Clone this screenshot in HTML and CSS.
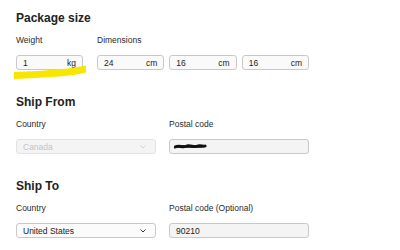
FILE: index.html
```html
<!DOCTYPE html>
<html>
<head>
<meta charset="utf-8">
<link rel="stylesheet" href="styles.css">
</head>
<body>
<main class="form">
  <section class="section">
    <h2 class="heading">Package size</h2>
    <div class="pkg-row">
      <div class="field weight">
        <div class="label">Weight</div>
        <div class="input-wrap">
          <div class="input"><span>1</span><span>kg</span></div>
          <svg class="highlight" width="74" height="16" viewBox="0 0 74 16"><path d="M0 8 C 14 7.5, 26 7, 36 6 C 50 5, 62 4, 72 1.5 L 72 8.5 C 62 11, 50 12.5, 36 13 C 24 14, 12 14.5, 0 15 Z" fill="#f6e600"/></svg>
        </div>
      </div>
      <div class="field dims">
        <div class="label">Dimensions</div>
        <div class="dim-inputs">
          <div class="input"><span>24</span><span>cm</span></div>
          <div class="input"><span>16</span><span>cm</span></div>
          <div class="input"><span>16</span><span>cm</span></div>
        </div>
      </div>
    </div>
  </section>

  <section class="section">
    <h2 class="heading">Ship From</h2>
    <div class="two-col">
      <div class="field">
        <div class="label">Country</div>
        <div class="input select disabled"><span>Canada</span>
          <svg class="chev" width="6" height="4" viewBox="0 0 6 4"><path d="M0.5 0.5 L3 3 L5.5 0.5" fill="none" stroke="currentColor" stroke-width="0.9"/></svg>
        </div>
      </div>
      <div class="field">
        <div class="label">Postal code</div>
        <div class="input grey">
          <svg class="scribble" width="34" height="7" viewBox="0 0 34 7"><path d="M1 4 C 5 2, 9 5, 13 3 C 17 2, 20 5, 24 3 C 27 2, 29 4, 31 3" fill="none" stroke="#111" stroke-width="3" stroke-linecap="round"/><path d="M4 3.5 L28 3.5" stroke="#111" stroke-width="2.5"/></svg>
        </div>
      </div>
    </div>
  </section>

  <section class="section">
    <h2 class="heading">Ship To</h2>
    <div class="two-col">
      <div class="field">
        <div class="label">Country</div>
        <div class="input select"><span>United States</span>
          <svg class="chev" width="6" height="4" viewBox="0 0 6 4"><path d="M0.5 0.5 L3 3 L5.5 0.5" fill="none" stroke="currentColor" stroke-width="1"/></svg>
        </div>
      </div>
      <div class="field">
        <div class="label">Postal code (Optional)</div>
        <div class="input grey"><span>90210</span></div>
      </div>
    </div>
  </section>
</main>
</body>
</html>
```

FILE: styles.css
```css
html, body {
  margin: 0;
  padding: 0;
  background: #ffffff;
}
body {
  font-family: "Liberation Sans", Arial, sans-serif;
  color: #222222;
}
.form {
  display: flex;
  flex-direction: column;
  gap: 25px;
  padding: 11px 0 0 16px;
}
.heading {
  margin: 0 0 10px 0;
  font-size: 12px;
  line-height: 14px;
  font-weight: bold;
  color: #222;
}
.label {
  font-size: 8.5px;
  line-height: 10px;
  color: #2a2a2a;
  margin-bottom: 10px;
}
.field {
  display: flex;
  flex-direction: column;
}
.pkg-row {
  display: flex;
  gap: 14px;
}
.weight {
  width: 67px;
}
.dims {
  width: 212px;
}
.dim-inputs {
  display: grid;
  grid-template-columns: repeat(3, 1fr);
  gap: 5px;
}
.input-wrap {
  position: relative;
}
.input {
  box-sizing: border-box;
  height: 15px;
  border: 1px solid #c9c9c9;
  border-radius: 3px;
  background: #fafafa;
  display: flex;
  align-items: center;
  justify-content: space-between;
  padding: 0 6px;
  font-size: 8.5px;
  color: #1a1a1a;
}
.highlight {
  position: absolute;
  left: -2px;
  top: 9px;
}
.two-col {
  display: grid;
  grid-template-columns: 140px 140px;
  gap: 13px;
}
.select {
  background: #fbfbfb;
}
.select .chev {
  color: #333;
  margin-right: 3px;
}
.disabled {
  background: #f4f4f4;
  border-color: #e3e3e3;
  color: #c4c4c4;
}
.disabled .chev {
  color: #cfcfcf;
}
.grey {
  background: #f4f4f4;
  justify-content: flex-start;
}
.scribble {
  margin-left: -2px;
}
```
